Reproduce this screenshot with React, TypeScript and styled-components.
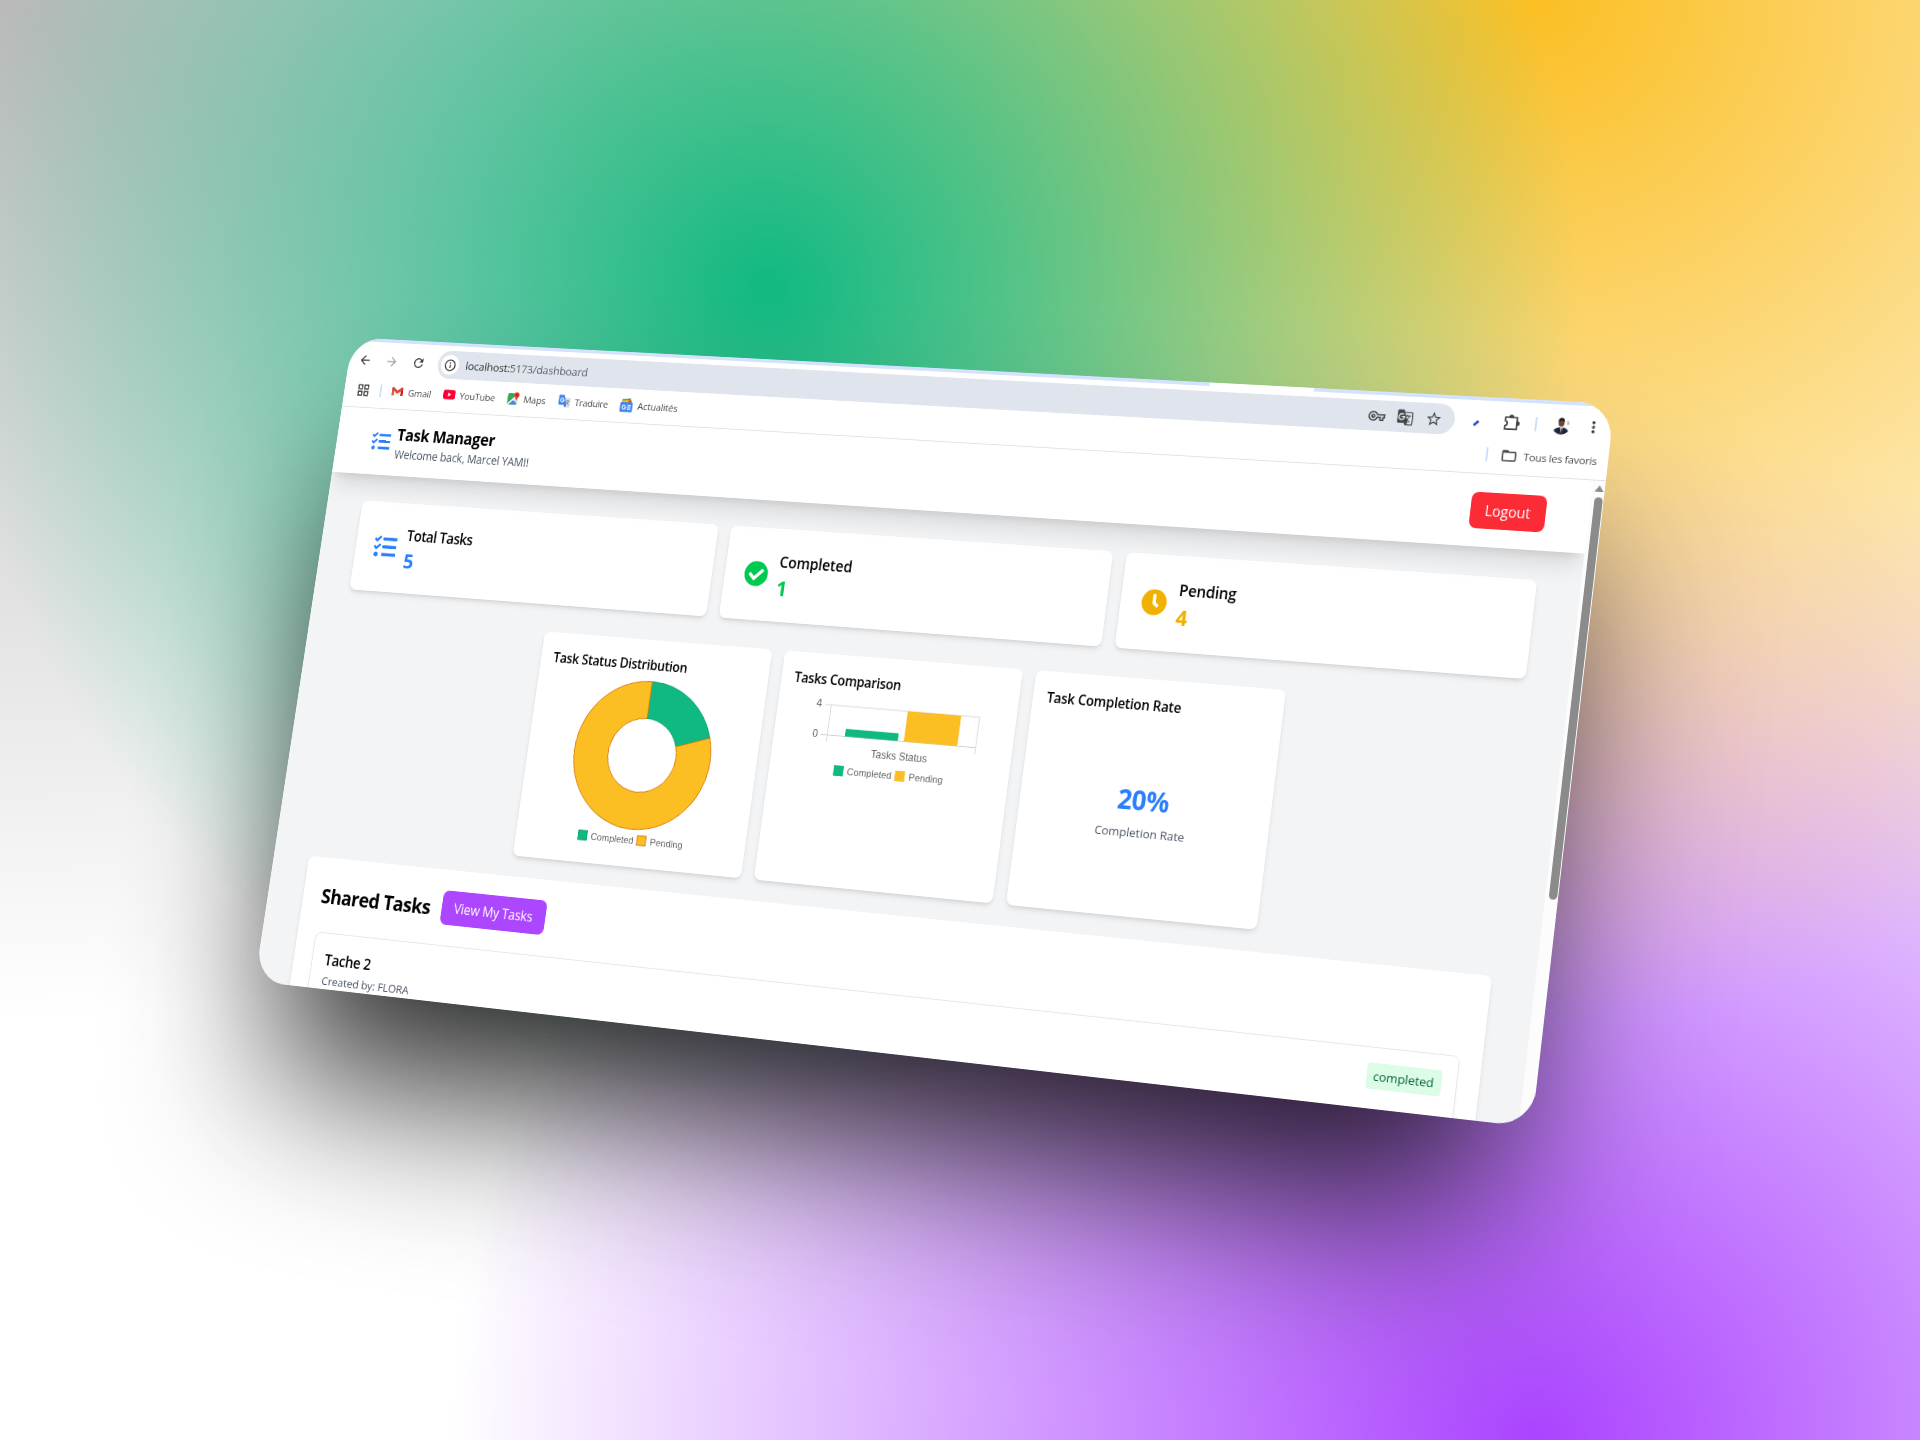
import React from 'react';
import styled, { createGlobalStyle } from 'styled-components';
import {
  MdArrowBack, MdArrowForward, MdRefresh, MdInfoOutline, MdOutlineGridView, MdMoreVert,
  MdStarBorder, MdOutlineVpnKey, MdGTranslate, MdFolderOpen,
} from 'react-icons/md';
import { FaTasks, FaCheckCircle, FaClock } from 'react-icons/fa';

const UI = `"Open Sans", "Noto Sans", sans-serif`;

const Global = createGlobalStyle`
  * { box-sizing: border-box; }
  html, body { margin: 0; padding: 0; background: #fff; }
  body { font-family: ${UI}; overflow: hidden; }
`;

/* ---------- stage ---------- */
const Stage = styled.div`
  width: 1920px;
  height: 1440px;
  overflow: hidden;
  background:
    radial-gradient(at 40% 20%, #10b981 0, transparent 50%),
    radial-gradient(at 80% 0%, #fbbf24 0, transparent 50%),
    radial-gradient(at 80% 100%, #ab43ff 0, transparent 50%),
    radial-gradient(at 0% 0%, #b9b9b9 0, transparent 50%),
    #fff;
`;

const Browser = styled.div`
  width: 1536px;
  height: 779px;
  border-radius: 40px;
  background: #fff;
  transform-origin: 0 0;
  transform: matrix3d(
    0.71, 0.015215, 0, -0.000069245,
    -0.1314, 0.803248, 0, -0.0000237176,
    0, 0, 1, 0,
    352.4, 337.4, 0, 1
  );
  box-shadow: 0 132px 200px -36px rgba(0, 0, 0, 0.85);
`;

const Clip = styled.div`
  width: 100%;
  height: 100%;
  border-radius: 40px;
  overflow: hidden;
  display: flex;
  flex-direction: column;
`;

/* ---------- browser chrome ---------- */
const TabStrip = styled.div`
  height: 3.5px;
  flex: none;
  background: #d3e3fd;
  padding-left: 1080px;
`;
const ActiveTab = styled.div`
  width: 121px;
  height: 3.5px;
  background: #fff;
  border-radius: 0 0 2px 2px;
`;
const Toolbar = styled.div`
  height: 47px;
  flex: none;
  display: flex;
  align-items: center;
  padding: 0 9px 0 12px;
  color: #474747;
`;
const NavButton = styled.span<{ $dim?: boolean }>`
  width: 20px;
  height: 20px;
  margin-right: 16px;
  display: flex;
  align-items: center;
  justify-content: center;
  font-size: 18px;
  color: ${(p) => (p.$dim ? '#a3a3a3' : '#3c3c3c')};
`;
const AddressBar = styled.div`
  width: 1243px;
  height: 34px;
  border-radius: 17px;
  background: #e0e5ed;
  display: flex;
  align-items: center;
  padding: 0 14px 0 4px;
`;
const SiteInfo = styled.span`
  width: 24px;
  height: 24px;
  border-radius: 50%;
  background: #fff;
  display: flex;
  align-items: center;
  justify-content: center;
  font-size: 17px;
  color: #2d2d2d;
`;
const Url = styled.span`
  flex: 1;
  margin-left: 9px;
  font-size: 13.5px;
  letter-spacing: -0.13px;
  color: #5a5f66;
  b { font-weight: 400; color: #2b2d30; }
`;
const PillIcon = styled.span`
  width: 20px;
  height: 20px;
  margin-left: 12px;
  display: flex;
  align-items: center;
  justify-content: center;
  font-size: 19px;
  color: #474747;
`;
const ToolItem = styled.span<{ $w: number; $ml: number }>`
  width: ${(p) => p.$w}px;
  margin-left: ${(p) => p.$ml}px;
  height: 20px;
  display: flex;
  align-items: center;
  justify-content: center;
  font-size: 20px;
  color: #3f3f3f;
`;
const Separator = styled.span<{ $ml?: number; $mr?: number }>`
  width: 2px;
  height: 16px;
  border-radius: 1px;
  background: #c9defc;
  margin: 0 ${(p) => p.$mr ?? 0}px 0 ${(p) => p.$ml ?? 0}px;
`;
const Bookmarks = styled.div`
  height: 34px;
  flex: none;
  display: flex;
  align-items: center;
  padding: 0 12.5px 8px 16px;
  border-bottom: 1px solid #dfe1e4;
  color: #474747;
  font-size: 11.6px;
  letter-spacing: -0.12px;
`;
const BookmarkIcon = styled.span<{ $size?: number; $mr?: number }>`
  display: flex;
  font-size: ${(p) => p.$size ?? 16}px;
  margin-right: ${(p) => p.$mr ?? 6}px;
`;
const BookmarkLabel = styled.span<{ $w: number; $mr?: number; $track?: number }>`
  width: ${(p) => p.$w}px;
  margin-right: ${(p) => p.$mr ?? 16}px;
  letter-spacing: ${(p) => p.$track ?? -0.12}px;
  white-space: nowrap;
`;
const Spacer = styled.span`flex: 1;`;

/* ---------- page ---------- */
const Viewport = styled.div`
  flex: 1;
  min-height: 0;
  display: flex;
`;
const Page = styled.div`
  flex: 1;
  min-width: 0;
  height: 100%;
  overflow: hidden;
  background: #f3f4f6;
`;
const Scrollbar = styled.div`
  width: 14.5px;
  background: #fcfcfc;
  display: flex;
  flex-direction: column;
  align-items: center;
  padding: 5px 0 0 3px;
`;
const ScrollUp = styled.span`
  border: 5px solid transparent;
  border-top: 0;
  border-bottom: 7px solid #8b8b8b;
`;
const Thumb = styled.span`
  width: 9px;
  height: 435px;
  margin-top: 6px;
  border-radius: 5px;
  background: #8b8b8b;
`;

const Header = styled.header`
  position: relative;
  height: 80px;
  padding: 0 47px;
  display: flex;
  align-items: center;
  background: #fff;
  box-shadow: 0 20px 25px -5px rgba(0, 0, 0, 0.1), 0 8px 10px -6px rgba(0, 0, 0, 0.1);
`;
const Brand = styled.div`
  flex: 1;
  display: flex;
  align-items: center;
  gap: 8px;
`;
const BrandIcon = styled.span`
  display: flex;
  font-size: 25px;
  color: #2b7fff;
`;
const BrandText = styled.div`
  padding-top: 1.500px;
`;
const BrandTitle = styled.div`
  font-size: 19.2px;
  line-height: 28px;
  font-weight: 700;
  letter-spacing: -0.32px;
  color: #000;
`;
const BrandNote = styled.div`
  font-size: 13.6px;
  line-height: 20px;
  letter-spacing: -0.1px;
  color: #4a5565;
`;
const Button = styled.button<{ $bg: string; $w: number; $track?: number }>`
  width: ${(p) => p.$w}px;
  height: 40px;
  border: 0;
  border-radius: 8px;
  padding: 2px 0 0;
  background: ${(p) => p.$bg};
  color: #fff;
  font: 400 15.4px/24px ${UI};
  letter-spacing: ${(p) => p.$track ?? 0}px;
`;

const Stats = styled.section`
  display: grid;
  grid-template-columns: repeat(3, 1fr);
  gap: 16px;
  padding: 32px 47px 0;
`;
const Card = styled.div`
  background: #fff;
  border-radius: 8px;
  box-shadow: 0 4px 6px -1px rgba(0, 0, 0, 0.1), 0 2px 4px -2px rgba(0, 0, 0, 0.1);
`;
const StatCard = styled(Card)`
  height: 108px;
  padding: 0 24px;
  display: flex;
  align-items: center;
  gap: 12px;
`;
const StatIcon = styled.span<{ $color: string }>`
  display: flex;
  font-size: 30px;
  color: ${(p) => p.$color};
`;
const StatText = styled.div`
  padding-top: 2px;
`;
const StatLabel = styled.div<{ $track: number }>`
  font-size: 17.2px;
  line-height: 28px;
  font-weight: 600;
  letter-spacing: ${(p) => p.$track}px;
  color: #000;
`;
const StatValue = styled.div<{ $color: string }>`
  font-size: 23.6px;
  line-height: 32px;
  font-weight: 700;
  color: ${(p) => p.$color};
`;

const Charts = styled.section`
  width: 900px;
  margin: 32px auto 0;
  display: grid;
  grid-template-columns: repeat(3, 1fr);
  gap: 16px;
`;
const ChartCard = styled(Card)`
  height: 264.5px;
  padding: 16px;
`;
const ChartTitle = styled.h3<{ $track: number }>`
  margin: 0 0 7px;
  padding-top: 1px;
  font-size: 15.3px;
  line-height: 24px;
  font-weight: 600;
  letter-spacing: ${(p) => p.$track}px;
  color: #000;
`;
const ChartSvg = styled.svg`
  display: block;
  width: 257px;
  height: 200px;
  overflow: visible;
  font: 12px "Liberation Sans", Arial, sans-serif;
`;
const Rate = styled.div`
  height: 200px;
  padding: 69px 3px 0 0;
  text-align: center;
`;
const RateValue = styled.div`
  font-size: 29.8px;
  line-height: 36px;
  font-weight: 700;
  letter-spacing: -0.4px;
  color: #2b7fff;
`;
const RateNote = styled.div`
  margin-top: 8px;
  font-size: 13.4px;
  line-height: 20px;
  color: #4a5565;
`;

const Shared = styled(Card)`
  margin: 23.5px 47px 0;
  padding: 24px;
  height: 400px;
`;
const SharedHead = styled.div`
  display: flex;
  align-items: center;
  height: 40px;
`;
const SharedTitle = styled.h2`
  width: 159px;
  margin: 0;
  padding-top: 2.500px;
  font-size: 23px;
  line-height: 32px;
  font-weight: 700;
  letter-spacing: -0.54px;
  white-space: nowrap;
  color: #000;
`;
const Task = styled.div`
  margin-top: 24px;
  height: 200px;
  border: 1px solid #e5e7eb;
  border-radius: 8px;
  padding: 16px;
  display: flex;
  justify-content: space-between;
  align-items: flex-start;
  box-shadow: 0 1px 3px rgba(0, 0, 0, 0.06);
`;
const TaskText = styled.div`
  padding-top: 1px;
`;
const TaskTitle = styled.div`
  font-size: 17.2px;
  line-height: 28px;
  font-weight: 600;
  letter-spacing: -0.33px;
  color: #000;
`;
const TaskNote = styled.div`
  font-size: 13.5px;
  line-height: 20px;
  letter-spacing: -0.1px;
  color: #4a5565;
`;
const Badge = styled.span`
  width: 82px;
  height: 28px;
  border-radius: 4px;
  background: #dcfce7;
  color: #016630;
  font-size: 13.4px;
  line-height: 29px;
  text-align: center;
`;

/* ---------- drawings ---------- */
const GmailIcon = () => (
  <svg width="17" height="16" viewBox="0 0 17 16">
    <path d="M1 3.2h3v9.8H1.8a.8.8 0 0 1-.8-.8z" fill="#e0574c" />
    <path d="M13 3.2h3v9a.8.8 0 0 1-.8.8H13z" fill="#c5221f" />
    <path d="M4 7.500h9v5.500H4z" fill="#f7f3f2" />
    <path d="M1 4.400C1 2.800 2.800 2.200 4 3.200l4.500 3.500L13 3.200c1.200-1 3-.4 3 1.200v.8l-7.500 5.600L1 5.200z" fill="#df4437" />
  </svg>
);
const YouTubeIcon = () => (
  <svg width="16" height="16" viewBox="0 0 16 16">
    <rect x="0" y="2.300" width="16" height="11.400" rx="3" fill="#ff0033" />
    <path d="M6.400 5.500v5l4.200-2.500z" fill="#fff" />
  </svg>
);
const MapsIcon = () => (
  <svg width="16" height="16" viewBox="0 0 16 16">
    <rect x="0.500" y="2" width="13" height="13.500" rx="2" fill="#34a853" />
    <path d="M0.800 14.500 12 3l1.500 3L4 15.500z" fill="#f4f6f5" />
    <path d="M2.500 15.500 7.800 10.300l5.200 5.200z" fill="#4285f4" />
    <path d="M8.300 9.800 13.500 6v9z" fill="#dfe3e6" />
    <path d="M12 0.500a3.600 3.600 0 0 1 3.600 3.600c0 2.300-2.800 3.500-3.600 7-.8-3.500-3.600-4.700-3.600-7A3.600 3.600 0 0 1 12 .5z" fill="#ea4335" />
    <circle cx="12" cy="4" r="1.200" fill="#8c1c13" />
  </svg>
);
const TranslateIcon = () => (
  <svg width="16" height="16" viewBox="0 0 16 16">
    <path d="M6 4h8.500a1 1 0 0 1 1 1v9.500a1 1 0 0 1-1 1H9.500z" fill="#dadce0" />
    <path d="M1.500.5h6L11 12.500H1.500a1 1 0 0 1-1-1v-10a1 1 0 0 1 1-1z" fill="#4285f4" />
    <path d="M7.500 12.500H11L9.500 15.500z" fill="#1a56c4" />
    <path d="M6.800 4.900A2.300 2.300 0 1 0 7.500 6.600H5.300" fill="none" stroke="#fff" strokeWidth="1.100" />
    <path d="M10 7.500h4.500M12.200 6.500v1M13.500 7.500c-.4 1.800-1.400 3-2.600 3.800M11 8.800c.6 1.300 1.600 2.200 2.800 2.800" fill="none" stroke="#6b7c93" strokeWidth=".9" />
  </svg>
);
const NewsIcon = () => (
  <svg width="17" height="17" viewBox="0 0 17 17">
    <path d="M2.500 1.500 13 .2l1.500 5.300H2.500z" fill="#34a853" />
    <path d="M2 3.300 12.500 1.700l2 4.500H2z" fill="#fbbc04" />
    <path d="M10.500 2.500h4v3.500h-4z" fill="#ea4335" />
    <rect x="0.500" y="5" width="16" height="11.800" rx="1.400" fill="#4285f4" />
    <path d="M7.200 9.300A2.300 2.300 0 1 0 7.900 11H5.800" fill="none" stroke="#fff" strokeWidth="1.200" />
    <path d="M9.800 8.700h4.400M9.800 10.900h4.400M9.800 13.100h4.400" stroke="#fff" strokeWidth="1.200" />
  </svg>
);
const PuzzleIcon = () => (
  <svg width="20" height="20" viewBox="0 0 20 20" fill="none" stroke="#3f3f3f" strokeWidth="1.700" strokeLinejoin="round">
    <path d="M3 4h13v13.200H3v-3.900c3-.3 3-5 0-5.300z" />
    <path d="M7.700 3.700a1.800 1.800 0 0 1 3.600 0z" fill="#3f3f3f" />
    <path d="M16.400 8.800a1.800 1.800 0 0 1 0 3.600z" fill="#3f3f3f" />
  </svg>
);
const Avatar = () => (
  <svg width="20" height="20" viewBox="0 0 20 20">
    <defs><clipPath id="face"><circle cx="10" cy="10" r="10" /></clipPath></defs>
    <g clipPath="url(#face)">
      <rect width="20" height="20" fill="#fdfdfc" />
      <path d="M15.800 4c2 .5 3 2.500 2.500 4.500l-2 .8z" fill="#b9c1aa" />
      <path d="M1 20c0-6 4-8 9-8s8.500 2 8.500 8z" fill="#1c2440" />
      <path d="M8.500 12h3.200l-1 5.500h-1z" fill="#e9e6ea" />
      <path d="M9.700 13h1l.3 6h-1.500z" fill="#8a2335" />
      <ellipse cx="9.800" cy="6.800" rx="3.300" ry="4.600" fill="#6b4636" />
      <path d="M6.400 5.800C6.400 2.800 8 1.600 9.900 1.600s3.400 1.300 3.300 4.200C12 4.600 8 4.600 6.400 5.800z" fill="#2b211f" />
    </g>
  </svg>
);

const GREEN = '#10b981';
const AMBER = '#fbbf24';

const polar = (r: number, deg: number) => {
  const a = ((deg - 90) * Math.PI) / 180;
  return `${(129.3 + r * Math.cos(a)).toFixed(2)} ${(86.4 + r * Math.sin(a)).toFixed(2)}`;
};
const arc = (from: number, to: number) => {
  const big = to - from > 180 ? 1 : 0;
  return `M${polar(86, from)}A86 86 0 ${big} 1 ${polar(86, to)}L${polar(43, to)}A43 43 0 ${big} 0 ${polar(43, from)}Z`;
};

const LegendText = styled.text`
  font-size: 11.25px;
`;
const Legend = ({ x, y, outlined }: { x: number; y: number; outlined?: boolean }) => (
  <g transform={`translate(${x} ${y})`} fill="#666">
    <rect x="0.500" y="0.500" width="11" height="11" fill={GREEN} stroke={outlined ? '#0f9f72' : GREEN} />
    <LegendText x="16.500" y="10">Completed</LegendText>
    <rect x="75.100" y="0.500" width="11" height="11" fill={AMBER} stroke={outlined ? '#d97706' : AMBER} />
    <LegendText x="91.500" y="10">Pending</LegendText>
  </g>
);

const Doughnut = () => (
  <ChartSvg viewBox="0 0 257 200">
    <path d={arc(0, 72)} fill={GREEN} stroke="#0c9e6e" strokeWidth="1" />
    <path d={arc(72, 360)} fill={AMBER} stroke="#d97706" strokeWidth="1" />
    <Legend x={63} y={178.500} outlined />
  </ChartSvg>
);

const Bars = () => (
  <ChartSvg viewBox="0 0 257 200">
    <g fill="none" stroke="#d9d9d9" strokeWidth="1">
      <path d="M41.500 10H229.300M49.500 10V52M229.300 10V52" />
      <path d="M41.500 44.500H229.300" stroke="#cfcfcf" />
    </g>
    <rect x="71" y="35.800" width="64.500" height="8.700" fill={GREEN} />
    <rect x="142.800" y="10" width="64.500" height="34.500" fill={AMBER} />
    <g fill="#666">
      <text x="38" y="13.500" textAnchor="end">4</text>
      <text x="38" y="48.500" textAnchor="end">0</text>
      <text x="139.300" y="66.300" textAnchor="middle">Tasks Status</text>
    </g>
    <Legend x={62.800} y={78} />
  </ChartSvg>
);

const bookmarks = [
  { label: 'Gmail', w: 31, icon: <GmailIcon /> },
  { label: 'YouTube', w: 46.5, icon: <YouTubeIcon /> },
  { label: 'Maps', w: 29, icon: <MapsIcon /> },
  { label: 'Traduire', w: 42.5, track: -0.35, icon: <TranslateIcon /> },
  { label: 'Actualités', w: 52, icon: <NewsIcon /> },
];

const stats = [
  { label: 'Total Tasks', value: 5, color: '#2b7fff', track: -0.5, icon: <FaTasks /> },
  { label: 'Completed', value: 1, color: '#00c950', track: -0.08, icon: <FaCheckCircle /> },
  { label: 'Pending', value: 4, color: '#f0b100', track: -0.18, icon: <FaClock /> },
];

export default function App() {
  return (
    <Stage>
      <Global />
      <Browser>
        <Clip>
          <TabStrip><ActiveTab /></TabStrip>
          <Toolbar>
            <NavButton><MdArrowBack /></NavButton>
            <NavButton $dim><MdArrowForward /></NavButton>
            <NavButton><MdRefresh /></NavButton>
            <AddressBar>
              <SiteInfo><MdInfoOutline /></SiteInfo>
              <Url><b>localhost:</b>5173/dashboard</Url>
              <PillIcon><MdOutlineVpnKey /></PillIcon>
              <PillIcon><MdGTranslate /></PillIcon>
              <PillIcon><MdStarBorder /></PillIcon>
            </AddressBar>
            <ToolItem $w={12} $ml={18}>
              <svg width="12" height="12" viewBox="0 0 12 12"><path d="M3.500 11 8.500 6" stroke="#2f49d1" strokeWidth="2.600" /></svg>
            </ToolItem>
            <ToolItem $w={20} $ml={23}><PuzzleIcon /></ToolItem>
            <Separator $ml={16} />
            <ToolItem $w={20} $ml={17}><Avatar /></ToolItem>
            <ToolItem $w={20} $ml={15}><MdMoreVert /></ToolItem>
          </Toolbar>
          <Bookmarks>
            <BookmarkIcon $size={19} $mr={13}><MdOutlineGridView /></BookmarkIcon>
            <Separator $mr={13} />
            {bookmarks.map((b) => (
              <React.Fragment key={b.label}>
                <BookmarkIcon>{b.icon}</BookmarkIcon>
                <BookmarkLabel $w={b.w} $track={b.track}>{b.label}</BookmarkLabel>
              </React.Fragment>
            ))}
            <Spacer />
            <Separator $mr={14} />
            <BookmarkIcon $size={19} $mr={7}><MdFolderOpen /></BookmarkIcon>
            <BookmarkLabel $w={80} $mr={0} $track={-0.18}>Tous les favoris</BookmarkLabel>
          </Bookmarks>
          <Viewport>
            <Page>
              <Header>
                <Brand>
                  <BrandIcon><FaTasks /></BrandIcon>
                  <BrandText>
                    <BrandTitle>Task Manager</BrandTitle>
                    <BrandNote>Welcome back, Marcel YAMI!</BrandNote>
                  </BrandText>
                </Brand>
                <Button $bg="#fb2c36" $w={82.5}>Logout</Button>
              </Header>
              <Stats>
                {stats.map((s) => (
                  <StatCard key={s.label}>
                    <StatIcon $color={s.color}>{s.icon}</StatIcon>
                    <StatText>
                      <StatLabel $track={s.track}>{s.label}</StatLabel>
                      <StatValue $color={s.color}>{s.value}</StatValue>
                    </StatText>
                  </StatCard>
                ))}
              </Stats>
              <Charts>
                <ChartCard>
                  <ChartTitle $track={-0.24}>Task Status Distribution</ChartTitle>
                  <Doughnut />
                </ChartCard>
                <ChartCard>
                  <ChartTitle $track={-0.26}>Tasks Comparison</ChartTitle>
                  <Bars />
                </ChartCard>
                <ChartCard>
                  <ChartTitle $track={-0.18}>Task Completion Rate</ChartTitle>
                  <Rate>
                    <RateValue>20%</RateValue>
                    <RateNote>Completion Rate</RateNote>
                  </Rate>
                </ChartCard>
              </Charts>
              <Shared>
                <SharedHead>
                  <SharedTitle>Shared Tasks</SharedTitle>
                  <Button $bg="#ad46ff" $w={133.5} $track={-0.12}>View My Tasks</Button>
                </SharedHead>
                <Task>
                  <TaskText>
                    <TaskTitle>Tache 2</TaskTitle>
                    <TaskNote>Created by: FLORA</TaskNote>
                  </TaskText>
                  <Badge>completed</Badge>
                </Task>
              </Shared>
            </Page>
            <Scrollbar><ScrollUp /><Thumb /></Scrollbar>
          </Viewport>
        </Clip>
      </Browser>
    </Stage>
  );
}
